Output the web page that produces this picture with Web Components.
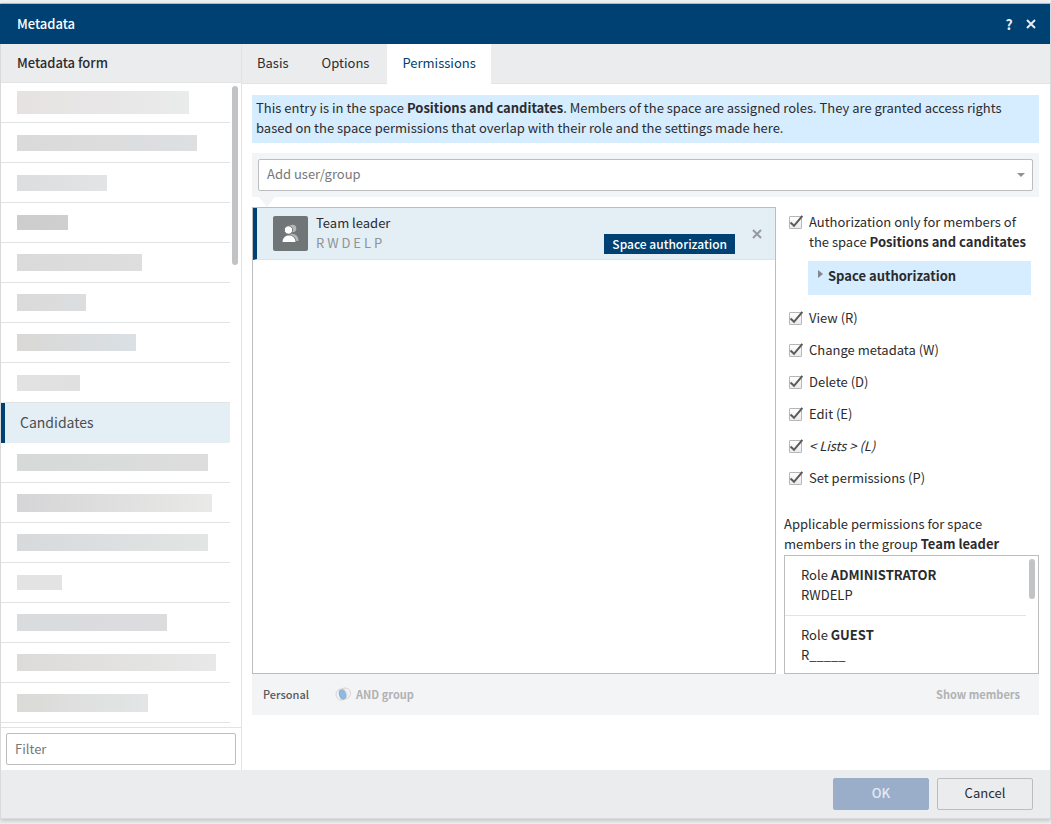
<!DOCTYPE html>
<html lang="en">
<head>
<meta charset="utf-8">
<meta name="viewport" content="width=device-width, initial-scale=1">
<title>Metadata</title>
<style>
    html, body {
        height: 100%;
    }
    body {
        margin: 0;
        background: #eff0f1;
        color: #2b2b2e;
        font-family: "Noto Sans CJK SC", "Open Sans", sans-serif;
        font-size: 13px;
        line-height: 20px;
        --navy: #004173;
        --bar: #ebecee;
        --soft: #f3f4f6;
        --line: #e2e3e5;
        --edge: #bcbdbf;
        --info: #d6edff;
        --active: #e3eef5;
        --muted: #77787b;
    }
</style>
</head>
<body>
<metadata-dialog>
    <side-list slot="side"></side-list>
    <tab-bar slot="tabs"></tab-bar>
    <permissions-panel slot="panel"></permissions-panel>
</metadata-dialog>

<script>
class MetadataDialog extends HTMLElement {

    constructor() {
        super();
        this.shadowDOM = this.attachShadow({mode: "open"});
    }

    connectedCallback() {
        this.shadowDOM.innerHTML = `
            <style>
                :host {
                    display: flex;
                    flex-direction: column;
                    box-sizing: border-box;
                    height: 100vh;
                    padding-top: 3px;
                    padding-bottom: 5px;
                }
                .dialog {
                    flex: 1;
                    min-height: 0;
                    display: flex;
                    flex-direction: column;
                    border: 1px solid #d9dadc;
                    border-top-color: #b4b8bc;
                    box-shadow: 0 2px 4px rgba(0, 0, 0, .18);
                    background: #fff;
                }
                header {
                    display: flex;
                    align-items: center;
                    height: 40px;
                    padding: 0 8px 0 17px;
                    margin-left: -1px;
                    background: var(--navy);
                    color: #fff;
                }
                h1 {
                    flex: 1;
                    margin: 0;
                    font-size: 13px;
                    font-weight: 500;
                }
                header button {
                    display: flex;
                    align-items: center;
                    justify-content: center;
                    width: 22px;
                    height: 22px;
                    padding: 0;
                    border: 0;
                    background: none;
                    color: #e6ebf1;
                    font: inherit;
                    font-size: 14px;
                    font-weight: 700;
                }
                .body {
                    flex: 1;
                    min-height: 0;
                    display: grid;
                    grid-template-columns: 241px minmax(0, 1fr);
                }
                .main {
                    display: flex;
                    flex-direction: column;
                    min-height: 0;
                }
                footer {
                    display: flex;
                    justify-content: flex-end;
                    gap: 8px;
                    padding: 8px 17px 8px 16px;
                    background: var(--bar);
                }
                footer button {
                    box-sizing: border-box;
                    width: 96px;
                    height: 32px;
                    padding: 0 0 2px;
                    border: 1px solid var(--edge);
                    border-radius: 2px;
                    background: none;
                    color: inherit;
                    font: inherit;
                }
                footer .ok {
                    border-color: #9aaeca;
                    background: #9aaeca;
                    color: #e4eaf2;
                    font-weight: 500;
                }
            </style>
            <section class="dialog" role="dialog" aria-labelledby="title">
                <header>
                    <h1 id="title">Metadata</h1>
                    <button type="button" aria-label="Help">?</button>
                    <button type="button" aria-label="Close">
                        <svg width="10" height="10" viewBox="0 0 10 10"><path d="M1 1 9 9M9 1 1 9" stroke="currentColor" stroke-width="2"/></svg>
                    </button>
                </header>
                <div class="body">
                    <slot name="side"></slot>
                    <div class="main">
                        <slot name="tabs"></slot>
                        <slot name="panel"></slot>
                    </div>
                </div>
                <footer>
                    <button type="button" class="ok">OK</button>
                    <button type="button">Cancel</button>
                </footer>
            </section>`;
    }
}

class SideList extends HTMLElement {

    constructor() {
        super();
        this.shadowDOM = this.attachShadow({mode: "open"});
        // [width, height, start colour, end colour] of each entry still loading
        this._items = [
            [172, 23, "#e6e2e2", "#eaebeb"],
            [180, 16, "#dadada", "#dedfe1"],
            [90, 16, "#dcdddf", "#e3e4e6"],
            [51, 15, "#cdcdcd", "#cfcfcf"],
            [125, 17, "#dadada", "#dedede"],
            [69, 17, "#dadada", "#dcdddf"],
            [119, 17, "#d9d8d6", "#dae0e5"],
            [63, 16, "#e2e2e2", "#e0e0e0"],
            "Candidates",
            [191, 17, "#d7d9d9", "#dddddd"],
            [195, 18, "#d5d5d7", "#e9e9e7"],
            [191, 17, "#d8d9db", "#e3e4e4"],
            [45, 15, "#e3e3e3", "#e3e3e3"],
            [150, 17, "#dadbdd", "#dcdcdd"],
            [199, 17, "#dcdbd9", "#e8e8e8"],
            [131, 18, "#dadad8", "#e3e5e6"]
        ];
    }

    connectedCallback() {
        this.shadowDOM.innerHTML = `
            <style>
                :host {
                    display: flex;
                    flex-direction: column;
                    min-height: 0;
                    border-right: 1px solid var(--line);
                }
                h2 {
                    box-sizing: border-box;
                    height: 39px;
                    margin: 0;
                    padding: 9px 16px;
                    border-bottom: 1px solid var(--line);
                    background: var(--bar);
                    font-size: 13px;
                    font-weight: 500;
                }
                .scroll {
                    flex: 1;
                    min-height: 0;
                    display: flex;
                    overflow: hidden;
                }
                ul {
                    flex: 1;
                    margin: 0;
                    padding: 0;
                    list-style: none;
                }
                li {
                    box-sizing: border-box;
                    height: 40px;
                    display: flex;
                    align-items: center;
                    padding-left: 16px;
                    border-bottom: 1px solid var(--line);
                }
                li.active {
                    padding: 0 0 2px 15px;
                    border-left: 4px solid var(--navy);
                    border-bottom: 0;
                    background: var(--active);
                    color: #4c4d50;
                    font-size: 14px;
                }
                .thumb {
                    width: 6px;
                    height: 179px;
                    margin: 3px 3px 0 2px;
                    border-radius: 3px;
                    background: #c2c3c4;
                }
                .filter {
                    padding: 5px;
                    border-top: 1px solid var(--line);
                }
                input {
                    box-sizing: border-box;
                    display: block;
                    width: 100%;
                    height: 32px;
                    padding: 0 8px 2px;
                    border: 1px solid var(--edge);
                    border-radius: 2px;
                    font: inherit;
                }
                input::placeholder {
                    color: var(--muted);
                }
            </style>
            <h2>Metadata form</h2>
            <div class="scroll">
                <ul></ul>
                <div class="thumb"></div>
            </div>
            <div class="filter"><input type="text" placeholder="Filter" aria-label="Filter"></div>`;
        const list = this.shadowDOM.querySelector("ul");
        this._items.forEach(item => {
            const li = document.createElement("li");
            if (typeof item === "string") {
                li.className = "active";
                li.textContent = item;
            } else {
                const bar = document.createElement("span");
                bar.style.width = `${item[0]}px`;
                bar.style.height = `${item[1]}px`;
                bar.style.background = `linear-gradient(90deg, ${item[2]}, ${item[3]})`;
                li.appendChild(bar);
            }
            list.appendChild(li);
        });
    }
}

class TabBar extends HTMLElement {

    constructor() {
        super();
        this.shadowDOM = this.attachShadow({mode: "open"});
    }

    connectedCallback() {
        this.shadowDOM.innerHTML = `
            <style>
                :host {
                    display: block;
                }
                nav {
                    box-sizing: border-box;
                    display: flex;
                    gap: 3px;
                    height: 40px;
                    background: var(--bar);
                    box-shadow: inset 0 -1px var(--line);
                }
                button {
                    padding: 0 15px 2px;
                    border: 0;
                    background: none;
                    color: inherit;
                    font: inherit;
                }
                button[aria-selected="true"] {
                    background: #fff;
                    color: var(--navy);
                }
            </style>
            <nav role="tablist">
                <button type="button" role="tab">Basis</button>
                <button type="button" role="tab">Options</button>
                <button type="button" role="tab" aria-selected="true">Permissions</button>
            </nav>`;
    }
}

class TickBox extends HTMLElement {

    constructor() {
        super();
        this.shadowDOM = this.attachShadow({mode: "open"});
    }

    connectedCallback() {
        this.shadowDOM.innerHTML = `
            <style>
                :host {
                    display: block;
                }
                label {
                    display: grid;
                    grid-template-columns: 14px minmax(0, 1fr);
                    column-gap: 6px;
                }
                .box {
                    display: grid;
                    width: 14px;
                    height: 14px;
                    margin-top: 3px;
                }
                input, svg {
                    grid-area: 1 / 1;
                }
                input {
                    appearance: none;
                    box-sizing: border-box;
                    width: 13px;
                    height: 13px;
                    margin: 1px 0 0;
                    border: 1px solid #b5b6b8;
                    border-radius: 1px;
                    background: linear-gradient(#fff, #ececee);
                }
                svg {
                    pointer-events: none;
                    visibility: hidden;
                }
                input:checked + svg {
                    visibility: visible;
                }
            </style>
            <label>
                <span class="box">
                    <input type="checkbox" checked>
                    <svg width="14" height="14" viewBox="0 0 14 14"><path d="M1.500 7.500 5 10.800 13.300 1" fill="none" stroke="#5c5d60" stroke-width="2"/></svg>
                </span>
                <span><slot></slot></span>
            </label>`;
    }
}

class RoleEntry extends HTMLElement {

    constructor() {
        super();
        this.shadowDOM = this.attachShadow({mode: "open"});
    }

    connectedCallback() {
        this.shadowDOM.innerHTML = `
            <style>
                :host {
                    display: block;
                    padding: 9px 16px 10px;
                    border-bottom: 1px solid var(--line);
                }
                strong {
                    font-weight: 700;
                }
            </style>
            <div>Role <strong>${this.getAttribute("name")}</strong></div>
            <div>${this.getAttribute("rights")}</div>`;
    }
}

class GroupRow extends HTMLElement {

    constructor() {
        super();
        this.shadowDOM = this.attachShadow({mode: "open"});
    }

    connectedCallback() {
        this.shadowDOM.innerHTML = `
            <style>
                :host {
                    box-sizing: border-box;
                    display: flex;
                    height: 52px;
                    padding: 5px 12px 5px 16px;
                    border-left: 4px solid var(--navy);
                    border-bottom: 1px solid #dfe3e6;
                    background: var(--active);
                }
                .avatar {
                    width: 35px;
                    height: 35px;
                    margin-top: 3px;
                    border-radius: 2px;
                    background: #707577;
                }
                .text {
                    flex: 1;
                    padding-left: 8px;
                }
                .rights {
                    color: #909397;
                }
                .badge {
                    align-self: flex-end;
                    padding: 0 8px;
                    background: var(--navy);
                    color: #fff;
                    font-size: 12px;
                    font-weight: 500;
                }
                button {
                    align-self: center;
                    display: flex;
                    margin-left: 16px;
                    padding: 1px;
                    border: 0;
                    background: none;
                    color: #97999c;
                }
            </style>
            <svg class="avatar" viewBox="0 0 35 35">
                <g fill="#b5b8b9"><circle cx="19.500" cy="12.500" r="3.800"/><path d="M17 25v-7c5-1 8.500 2 8.500 7z"/></g>
                <g fill="#fff" stroke="#707577"><circle cx="15.500" cy="14" r="4.200"/><path d="M9 26.500c0-10 14-10 14 0z"/></g>
            </svg>
            <div class="text">
                <div><slot name="name"></slot></div>
                <div class="rights"><slot name="rights"></slot></div>
            </div>
            <span class="badge"><slot name="badge"></slot></span>
            <button type="button" aria-label="Remove">
                <svg width="10" height="10" viewBox="0 0 10 10"><path d="M1 1 9 9M9 1 1 9" stroke="currentColor" stroke-width="2"/></svg>
            </button>`;
    }
}

class PermissionsPanel extends HTMLElement {

    constructor() {
        super();
        this.shadowDOM = this.attachShadow({mode: "open"});
    }

    connectedCallback() {
        this.shadowDOM.innerHTML = `
            <style>
                :host {
                    flex: 1;
                    min-height: 0;
                    display: flex;
                    flex-direction: column;
                    padding: 11px 11px 55px 10px;
                }
                p {
                    margin: 0;
                }
                .info {
                    padding: 3px 4px 5px;
                    background: var(--info);
                }
                .add {
                    position: relative;
                    margin: 10px 0;
                    padding: 6px;
                    background: var(--soft);
                }
                .add::after {
                    content: "";
                    position: absolute;
                    top: 100%;
                    left: 7px;
                    border: 8px solid transparent;
                    border-top: 10px solid var(--soft);
                    border-bottom: 0;
                }
                .combo {
                    display: flex;
                    align-items: center;
                    height: 30px;
                    padding: 0 7px 0 8px;
                    border: 1px solid var(--edge);
                    border-radius: 2px;
                    background: #fff;
                    color: #919294;
                }
                .combo input {
                    flex: 1;
                    min-width: 0;
                    padding: 0 0 2px;
                    border: 0;
                    outline: 0;
                    background: none;
                    font: inherit;
                }
                .combo input::placeholder {
                    color: var(--muted);
                }
                .columns {
                    flex: 1;
                    min-height: 0;
                    display: grid;
                    grid-template-columns: minmax(0, 1fr) 255px;
                    column-gap: 8px;
                }
                .groups {
                    border: 1px solid var(--edge);
                }
                .rights {
                    display: flex;
                    flex-direction: column;
                    min-height: 0;
                    padding-top: 5px;
                }
                .ticks {
                    display: flex;
                    flex-direction: column;
                    gap: 12px;
                    padding: 0 8px 0 5px;
                }
                details {
                    margin: -3px 0 0 19px;
                    padding: 5px 10px 9px;
                    background: var(--info);
                }
                details + tick-box {
                    margin-top: 1px;
                }
                summary {
                    display: flex;
                    gap: 5px;
                    font-weight: 700;
                    list-style: none;
                }
                summary svg {
                    margin-top: 4px;
                }
                .caption {
                    margin-top: 26px;
                }
                .roles {
                    flex: 1;
                    min-height: 0;
                    display: flex;
                    overflow: hidden;
                    margin-top: 1px;
                    border: 1px solid var(--edge);
                }
                .entries {
                    flex: 1;
                }
                .thumb {
                    width: 6px;
                    height: 40px;
                    margin: 3px 3px 0;
                    border-radius: 3px;
                    background: #c2c3c4;
                }
                .actions {
                    box-sizing: border-box;
                    display: flex;
                    align-items: center;
                    gap: 26px;
                    height: 41px;
                    padding: 0 19px 2px 11px;
                    background: var(--soft);
                }
                .actions button {
                    display: flex;
                    align-items: center;
                    gap: 4px;
                    padding: 0;
                    border: 0;
                    background: none;
                    color: #58595c;
                    font: inherit;
                    font-size: 11px;
                    font-weight: 500;
                }
                .actions button:disabled {
                    color: #b0b2b4;
                    font-weight: 700;
                }
                .actions .members {
                    margin-left: auto;
                }
            </style>
            <p class="info">This entry is in the space <strong>Positions and canditates</strong>. Members of the space are assigned roles. They are granted access rights based on the space permissions that overlap with their role and the settings made here.</p>
            <div class="add">
                <div class="combo">
                    <input type="text" placeholder="Add user/group" aria-label="Add user/group">
                    <svg width="8" height="4" viewBox="0 0 8 4"><path d="M0 0h8L4 4z" fill="currentColor"/></svg>
                </div>
            </div>
            <div class="columns">
                <div class="groups">
                    <group-row>
                        <span slot="name">Team leader</span>
                        <span slot="rights">R W D E L P</span>
                        <span slot="badge">Space authorization</span>
                    </group-row>
                </div>
                <div class="rights">
                    <div class="ticks">
                        <tick-box>Authorization only for members of the space <strong>Positions and canditates</strong></tick-box>
                        <details>
                            <summary>
                                <svg width="5" height="8" viewBox="0 0 5 8"><path d="M0 0 5 4 0 8z" fill="#85888b"/></svg>
                                Space authorization
                            </summary>
                        </details>
                        <tick-box>View (R)</tick-box>
                        <tick-box>Change metadata (W)</tick-box>
                        <tick-box>Delete (D)</tick-box>
                        <tick-box>Edit (E)</tick-box>
                        <tick-box><em>&lt; Lists &gt; (L)</em></tick-box>
                        <tick-box>Set permissions (P)</tick-box>
                    </div>
                    <p class="caption">Applicable permissions for space members in the group <strong>Team leader</strong></p>
                    <div class="roles">
                        <div class="entries">
                            <role-entry name="ADMINISTRATOR" rights="RWDELP"></role-entry>
                            <role-entry name="GUEST" rights="R_____"></role-entry>
                        </div>
                        <div class="thumb"></div>
                    </div>
                </div>
            </div>
            <div class="actions">
                <button type="button">Personal</button>
                <button type="button" disabled>
                    <svg width="17" height="14" viewBox="0 0 17 14">
                        <g fill="none" stroke="#cfd1d3"><circle cx="6.500" cy="7.500" r="5.500"/><circle cx="10" cy="6.500" r="5.500"/></g>
                        <ellipse cx="7.500" cy="7.500" rx="3" ry="4.500" fill="#80bdf2" stroke="#a3aab0" transform="rotate(-20 7.500 7.500)"/>
                    </svg>
                    AND group
                </button>
                <button type="button" class="members" disabled>Show members</button>
            </div>`;
    }
}

customElements.define("role-entry", RoleEntry);
customElements.define("group-row", GroupRow);
customElements.define("tick-box", TickBox);
customElements.define("tab-bar", TabBar);
customElements.define("side-list", SideList);
customElements.define("permissions-panel", PermissionsPanel);
customElements.define("metadata-dialog", MetadataDialog);
</script>
</body>
</html>
